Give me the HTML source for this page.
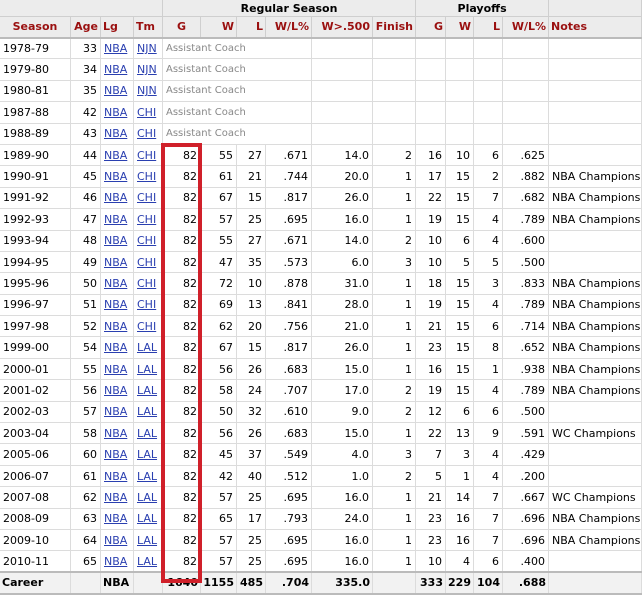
<!DOCTYPE html>
<html><head><meta charset="utf-8"><style>
html,body{margin:0;padding:0;background:#fff;width:643px;height:597px;overflow:hidden}
table{border-collapse:collapse;table-layout:fixed;width:642px;font-family:"DejaVu Sans","Liberation Sans",sans-serif;font-size:11px;color:#000;position:absolute;left:-1px;top:-1px}
td,th{border:1px solid #dcdcdc;padding:0 3px;white-space:nowrap;overflow:hidden;text-align:right}
tr{height:21.4px}
thead tr.g{height:18px}
thead tr.h{height:21px}
thead th{background:#ececec;border-color:#cfcfcf;color:#000;font-size:11px}
thead tr.h th{color:#9a1010;text-align:right;padding:0 2px}
thead tr.h th.l{text-align:left}
thead tr.h{border-bottom:2px solid #bbb}
td.l{text-align:left}
a{color:#2a3fb0;text-decoration:underline}
td.ac{color:#888;font-size:10px;text-align:left}
tr.c td{background:#f2f2f2;font-weight:bold;border-top:2px solid #bbb;border-bottom:2px solid #bbb;padding:0 2px}
.box{position:absolute;left:161px;top:143px;width:33px;height:432px;border:4px solid #d0202a}
</style></head><body>
<table>
<colgroup><col style="width:71px"><col style="width:30px"><col style="width:33px"><col style="width:29px"><col style="width:38px"><col style="width:36px"><col style="width:29px"><col style="width:46px"><col style="width:61px"><col style="width:43px"><col style="width:30px"><col style="width:28px"><col style="width:29px"><col style="width:46px"><col style="width:93px"></colgroup>
<thead>
<tr class="g"><th colspan="4"></th><th colspan="6" style="text-align:center">Regular Season</th><th colspan="4" style="text-align:center">Playoffs</th><th></th></tr>
</thead>
</table>
<table style="top:16px">
<colgroup><col style="width:71px"><col style="width:30px"><col style="width:33px"><col style="width:29px"><col style="width:38px"><col style="width:36px"><col style="width:29px"><col style="width:46px"><col style="width:61px"><col style="width:43px"><col style="width:30px"><col style="width:28px"><col style="width:29px"><col style="width:46px"><col style="width:93px"></colgroup>
<thead>
<tr class="h"><th style="text-align:center">Season</th><th>Age</th><th class="l">Lg</th><th class="l">Tm</th><th style="text-align:center">G</th><th>W</th><th>L</th><th>W/L%</th><th>W&gt;.500</th><th>Finish</th><th>G</th><th>W</th><th>L</th><th>W/L%</th><th class="l">Notes</th></tr>
</thead>
<tbody>
<tr><td class="l">1978-79</td><td>33</td><td class="l"><a>NBA</a></td><td class="l"><a>NJN</a></td><td class="ac" colspan="4">Assistant Coach</td><td></td><td></td><td></td><td></td><td></td><td></td><td></td></tr>
<tr><td class="l">1979-80</td><td>34</td><td class="l"><a>NBA</a></td><td class="l"><a>NJN</a></td><td class="ac" colspan="4">Assistant Coach</td><td></td><td></td><td></td><td></td><td></td><td></td><td></td></tr>
<tr><td class="l">1980-81</td><td>35</td><td class="l"><a>NBA</a></td><td class="l"><a>NJN</a></td><td class="ac" colspan="4">Assistant Coach</td><td></td><td></td><td></td><td></td><td></td><td></td><td></td></tr>
<tr><td class="l">1987-88</td><td>42</td><td class="l"><a>NBA</a></td><td class="l"><a>CHI</a></td><td class="ac" colspan="4">Assistant Coach</td><td></td><td></td><td></td><td></td><td></td><td></td><td></td></tr>
<tr><td class="l">1988-89</td><td>43</td><td class="l"><a>NBA</a></td><td class="l"><a>CHI</a></td><td class="ac" colspan="4">Assistant Coach</td><td></td><td></td><td></td><td></td><td></td><td></td><td></td></tr>
<tr><td class="l">1989-90</td><td>44</td><td class="l"><a>NBA</a></td><td class="l"><a>CHI</a></td><td>82</td><td>55</td><td>27</td><td>.671</td><td>14.0</td><td>2</td><td>16</td><td>10</td><td>6</td><td>.625</td><td class="l"></td></tr>
<tr><td class="l">1990-91</td><td>45</td><td class="l"><a>NBA</a></td><td class="l"><a>CHI</a></td><td>82</td><td>61</td><td>21</td><td>.744</td><td>20.0</td><td>1</td><td>17</td><td>15</td><td>2</td><td>.882</td><td class="l">NBA Champions</td></tr>
<tr><td class="l">1991-92</td><td>46</td><td class="l"><a>NBA</a></td><td class="l"><a>CHI</a></td><td>82</td><td>67</td><td>15</td><td>.817</td><td>26.0</td><td>1</td><td>22</td><td>15</td><td>7</td><td>.682</td><td class="l">NBA Champions</td></tr>
<tr><td class="l">1992-93</td><td>47</td><td class="l"><a>NBA</a></td><td class="l"><a>CHI</a></td><td>82</td><td>57</td><td>25</td><td>.695</td><td>16.0</td><td>1</td><td>19</td><td>15</td><td>4</td><td>.789</td><td class="l">NBA Champions</td></tr>
<tr><td class="l">1993-94</td><td>48</td><td class="l"><a>NBA</a></td><td class="l"><a>CHI</a></td><td>82</td><td>55</td><td>27</td><td>.671</td><td>14.0</td><td>2</td><td>10</td><td>6</td><td>4</td><td>.600</td><td class="l"></td></tr>
<tr><td class="l">1994-95</td><td>49</td><td class="l"><a>NBA</a></td><td class="l"><a>CHI</a></td><td>82</td><td>47</td><td>35</td><td>.573</td><td>6.0</td><td>3</td><td>10</td><td>5</td><td>5</td><td>.500</td><td class="l"></td></tr>
<tr><td class="l">1995-96</td><td>50</td><td class="l"><a>NBA</a></td><td class="l"><a>CHI</a></td><td>82</td><td>72</td><td>10</td><td>.878</td><td>31.0</td><td>1</td><td>18</td><td>15</td><td>3</td><td>.833</td><td class="l">NBA Champions</td></tr>
<tr><td class="l">1996-97</td><td>51</td><td class="l"><a>NBA</a></td><td class="l"><a>CHI</a></td><td>82</td><td>69</td><td>13</td><td>.841</td><td>28.0</td><td>1</td><td>19</td><td>15</td><td>4</td><td>.789</td><td class="l">NBA Champions</td></tr>
<tr><td class="l">1997-98</td><td>52</td><td class="l"><a>NBA</a></td><td class="l"><a>CHI</a></td><td>82</td><td>62</td><td>20</td><td>.756</td><td>21.0</td><td>1</td><td>21</td><td>15</td><td>6</td><td>.714</td><td class="l">NBA Champions</td></tr>
<tr><td class="l">1999-00</td><td>54</td><td class="l"><a>NBA</a></td><td class="l"><a>LAL</a></td><td>82</td><td>67</td><td>15</td><td>.817</td><td>26.0</td><td>1</td><td>23</td><td>15</td><td>8</td><td>.652</td><td class="l">NBA Champions</td></tr>
<tr><td class="l">2000-01</td><td>55</td><td class="l"><a>NBA</a></td><td class="l"><a>LAL</a></td><td>82</td><td>56</td><td>26</td><td>.683</td><td>15.0</td><td>1</td><td>16</td><td>15</td><td>1</td><td>.938</td><td class="l">NBA Champions</td></tr>
<tr><td class="l">2001-02</td><td>56</td><td class="l"><a>NBA</a></td><td class="l"><a>LAL</a></td><td>82</td><td>58</td><td>24</td><td>.707</td><td>17.0</td><td>2</td><td>19</td><td>15</td><td>4</td><td>.789</td><td class="l">NBA Champions</td></tr>
<tr><td class="l">2002-03</td><td>57</td><td class="l"><a>NBA</a></td><td class="l"><a>LAL</a></td><td>82</td><td>50</td><td>32</td><td>.610</td><td>9.0</td><td>2</td><td>12</td><td>6</td><td>6</td><td>.500</td><td class="l"></td></tr>
<tr><td class="l">2003-04</td><td>58</td><td class="l"><a>NBA</a></td><td class="l"><a>LAL</a></td><td>82</td><td>56</td><td>26</td><td>.683</td><td>15.0</td><td>1</td><td>22</td><td>13</td><td>9</td><td>.591</td><td class="l">WC Champions</td></tr>
<tr><td class="l">2005-06</td><td>60</td><td class="l"><a>NBA</a></td><td class="l"><a>LAL</a></td><td>82</td><td>45</td><td>37</td><td>.549</td><td>4.0</td><td>3</td><td>7</td><td>3</td><td>4</td><td>.429</td><td class="l"></td></tr>
<tr><td class="l">2006-07</td><td>61</td><td class="l"><a>NBA</a></td><td class="l"><a>LAL</a></td><td>82</td><td>42</td><td>40</td><td>.512</td><td>1.0</td><td>2</td><td>5</td><td>1</td><td>4</td><td>.200</td><td class="l"></td></tr>
<tr><td class="l">2007-08</td><td>62</td><td class="l"><a>NBA</a></td><td class="l"><a>LAL</a></td><td>82</td><td>57</td><td>25</td><td>.695</td><td>16.0</td><td>1</td><td>21</td><td>14</td><td>7</td><td>.667</td><td class="l">WC Champions</td></tr>
<tr><td class="l">2008-09</td><td>63</td><td class="l"><a>NBA</a></td><td class="l"><a>LAL</a></td><td>82</td><td>65</td><td>17</td><td>.793</td><td>24.0</td><td>1</td><td>23</td><td>16</td><td>7</td><td>.696</td><td class="l">NBA Champions</td></tr>
<tr><td class="l">2009-10</td><td>64</td><td class="l"><a>NBA</a></td><td class="l"><a>LAL</a></td><td>82</td><td>57</td><td>25</td><td>.695</td><td>16.0</td><td>1</td><td>23</td><td>16</td><td>7</td><td>.696</td><td class="l">NBA Champions</td></tr>
<tr><td class="l">2010-11</td><td>65</td><td class="l"><a>NBA</a></td><td class="l"><a>LAL</a></td><td>82</td><td>57</td><td>25</td><td>.695</td><td>16.0</td><td>1</td><td>10</td><td>4</td><td>6</td><td>.400</td><td class="l"></td></tr>
<tr class="c"><td class="l">Career</td><td></td><td class="l">NBA</td><td></td><td>1640</td><td>1155</td><td>485</td><td>.704</td><td>335.0</td><td></td><td>333</td><td>229</td><td>104</td><td>.688</td><td></td></tr>
</tbody>
</table>
<div class="box"></div>
</body></html>
